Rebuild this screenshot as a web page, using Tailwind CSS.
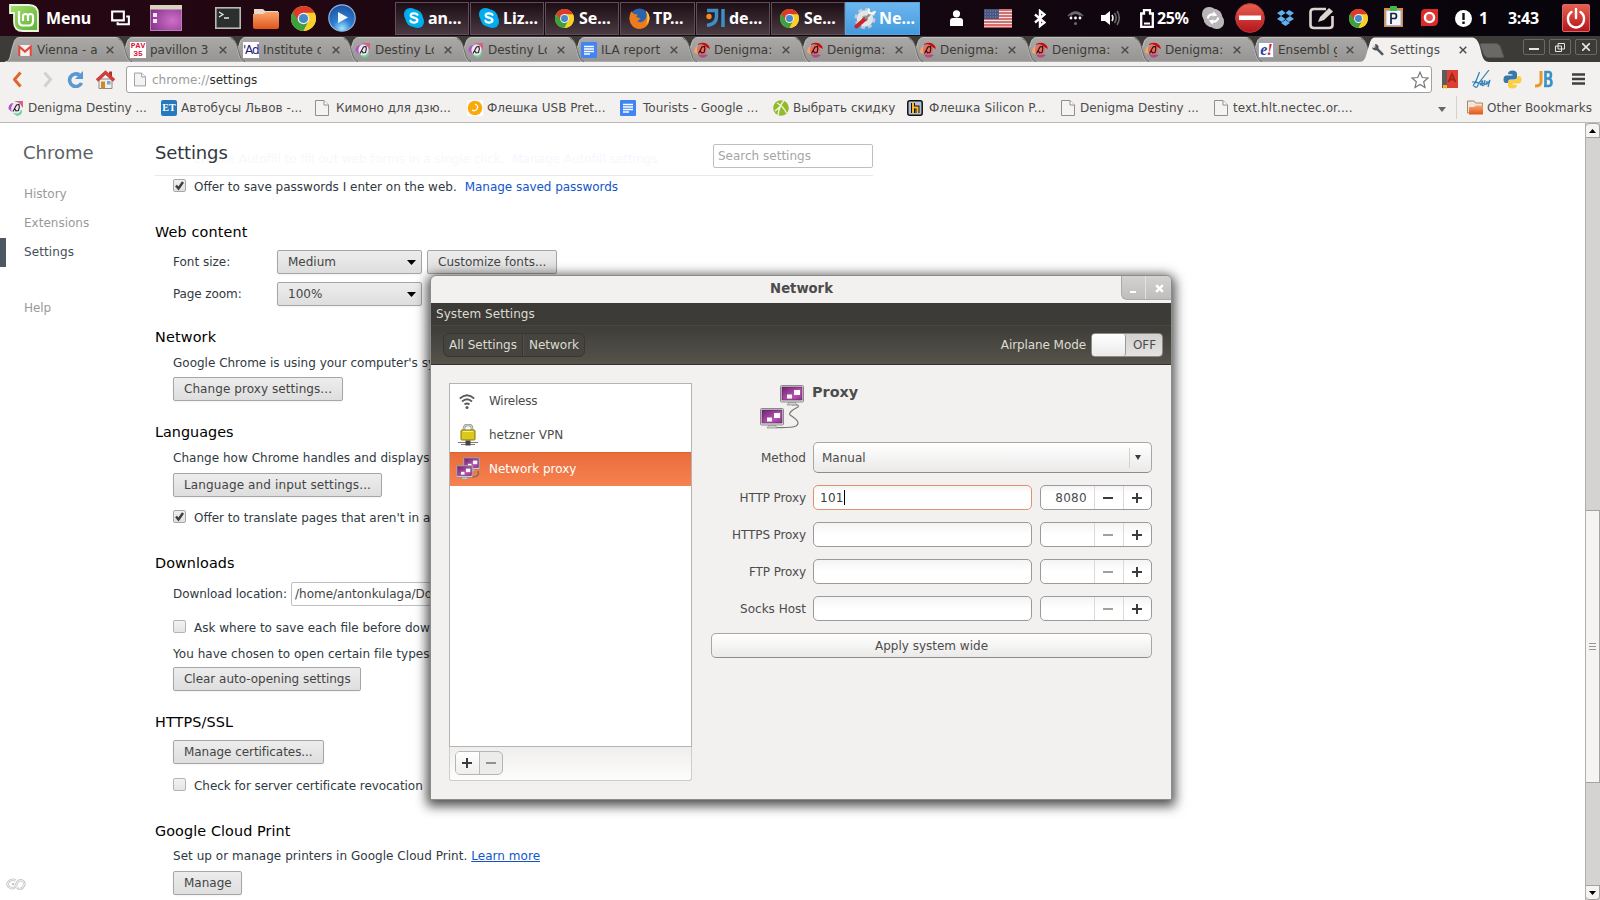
<!DOCTYPE html>
<html lang="en">
<head>
<meta charset="utf-8">
<title>Settings</title>
<script src="https://cdn.jsdelivr.net/npm/@tailwindcss/browser@4"></script>
</head>
<body class="w-[1600px] h-[900px] overflow-hidden relative bg-white font-['DejaVu_Sans',sans-serif] text-xs text-[#303942] whitespace-nowrap">

<!-- shared symbols -->
<svg width="0" height="0" class="absolute">
  <defs>
    <linearGradient id="tabg" x1="0" y1="0" x2="0" y2="1"><stop offset="0" stop-color="#aaa9a7"/><stop offset="1" stop-color="#959492"/></linearGradient>
    <linearGradient id="purp" x1="0" y1="0" x2="1" y2="1"><stop offset="0" stop-color="#6d2270"/><stop offset=".65" stop-color="#b954b2"/><stop offset="1" stop-color="#8a3288"/></linearGradient>
    <radialGradient id="desk" cx=".7" cy=".6" r=".8"><stop offset="0" stop-color="#cf6fc6"/><stop offset="1" stop-color="#83308a"/></radialGradient>
    <linearGradient id="org" x1="0" y1="0" x2="0" y2="1"><stop offset="0" stop-color="#f9a56d"/><stop offset="1" stop-color="#e0561c"/></linearGradient>
    <linearGradient id="redg" x1="0" y1="0" x2="0" y2="1"><stop offset="0" stop-color="#e8604f"/><stop offset="1" stop-color="#b3141b"/></linearGradient>
    <radialGradient id="blu" cx=".5" cy=".9" r=".9"><stop offset="0" stop-color="#9ee8ff"/><stop offset=".4" stop-color="#2f7fd0"/><stop offset="1" stop-color="#1c4fa0"/></radialGradient>
    <linearGradient id="mint" x1="0" y1="0" x2="1" y2="1"><stop offset="0" stop-color="#a6e06c"/><stop offset="1" stop-color="#5fb038"/></linearGradient>
  </defs>
  <symbol id="tab" viewBox="0 0 129 25"><path d="M0 25C6 25 5 17 8.500 7C10 2 11 .5 15 .5H110C114 .5 116 2 118 7C121 16 121 25 127 25Z" fill="url(#tabg)" stroke="#c3c2c0" stroke-width="1"/><path d="M113 1.500Q116.500 2 118.500 7C121.500 16 122 24 127 24.500" fill="none" stroke="#6b6a66" stroke-width="1"/></symbol>
  <symbol id="x" viewBox="0 0 8 8"><path d="M.7.7L7.300 7.300M7.300.7L.7 7.300" stroke="#4a4a48" stroke-width="1.400"/></symbol>
  <symbol id="chrome" viewBox="0 0 24 24"><circle cx="12" cy="12" r="12" fill="#f7cf25"/><path d="M12 12L1.600 6A12 12 0 0 0 12 24L17 14.500Z" fill="#3fa13e"/><path d="M12 6.500H22.600A12 12 0 0 1 12 24L16.800 14.700Z" fill="#f9d02b"/><path d="M1.600 6A12 12 0 0 1 22.600 6.500H12L7 14Z" fill="#dc3b2b"/><circle cx="12" cy="12" r="5.600" fill="#f3f3ee"/><circle cx="12" cy="12" r="4.400" fill="#4787cc"/></symbol>
  <symbol id="skype" viewBox="0 0 20 20"><rect x="0" y="0" width="13" height="13" rx="6" fill="#00a9ee"/><rect x="7" y="7" width="13" height="13" rx="6" fill="#00a9ee"/><circle cx="10" cy="10" r="8.700" fill="#00aff0"/><path d="M13.500 6.800C12.500 4.800 6.800 4.600 6.700 7.400C6.700 10.300 13.400 9 13.400 12.300C13.400 15.200 7.500 15.400 6.400 12.700" fill="none" stroke="#fff" stroke-width="2.200" stroke-linecap="round"/></symbol>
  <symbol id="doc" viewBox="0 0 16 16"><rect width="16" height="16" rx="1" fill="#4184f3"/><path d="M3 4.500H13M3 7H13M3 9.500H13M3 12H9" stroke="#fff" stroke-width="1.300"/></symbol>
  <symbol id="page" viewBox="0 0 14 16"><path d="M.5.5H9L13.500 5V15.500H.5Z" fill="#f3f3f3" stroke="#8f8f8f"/><path d="M9 .5V5H13.500" fill="#fff" stroke="#8f8f8f"/></symbol>
  <symbol id="dest" viewBox="0 0 16 16"><path d="M6 1L15 1V8L11 3Z" fill="#d8618c"/><path d="M4 3Q0 5 .5 9L4 12Q2 7 6 4Z" fill="#b552d0"/><path d="M5 13L14 10Q15 15 9 16Z" fill="#6fcf9a"/><ellipse cx="8.500" cy="8" rx="5" ry="5.500" fill="#eee6ee"/><path d="M5 11.500L8.500 5L11 4.500Q12 7 10.500 10.500L8 11L7 9" fill="none" stroke="#222" stroke-width="1.100"/></symbol>
  <symbol id="den" viewBox="0 0 16 16"><path d="M4 2Q11-1.500 15 4L16 7L12 5Q9 1 4 3Z" fill="#cc0b0b"/><path d="M3 4Q-1 7 .5 11L4 12Z" fill="#f0a868"/><path d="M4 12.500Q10 12 14 13Q10 17 6 15Z" fill="#b04a88"/><circle cx="8" cy="8" r="5" fill="#e86b64"/><path d="M4.500 11.500L8 5L10.500 4.500Q11.500 7 10 10.500L7.500 11L6.500 9" fill="none" stroke="#1b1010" stroke-width="1.100"/></symbol>
  <symbol id="mon" viewBox="0 0 24 21"><path d="M9 17H15L17 20H7Z" fill="#d0d0cc" stroke="#888" stroke-width=".7"/><rect x=".5" y=".5" width="23" height="16.500" rx="1" fill="#e4e4e1" stroke="#8a8a86"/><rect x="2" y="2" width="20" height="13" fill="url(#purp)" stroke="#5d1a62" stroke-width=".6"/><rect x="14" y="5" width="6" height="5" fill="#fff"/><rect x="7" y="9.500" width="5" height="4" fill="#fff"/></symbol>
  <symbol id="plus" viewBox="0 0 12 12"><path d="M1 6H11M6 1V11" stroke="#3c3c3c" stroke-width="2"/></symbol>
  <symbol id="minus" viewBox="0 0 12 12"><path d="M1 6H11" stroke="currentColor" stroke-width="2"/></symbol>
</svg>

<!-- desktop panel -->
<header class="h-9 w-full flex items-center bg-linear-to-r from-[#260713] via-[#170711] via-50% to-[#07040b] text-white font-['Noto_Sans','Open_Sans',sans-serif] font-bold text-base">
    <svg class="ml-[9px] w-[30px] h-7" viewBox="0 0 30 28"><path d="M1 1H20Q29 1 29 10V27H14Q5 27 5 18V9H1Z" fill="url(#mint)" stroke="#e9f5df" stroke-width="1.800"/><path d="M10 7V17Q10 21.500 14 21.500H20Q24 21.500 24 17V12.500Q24 10 21.500 10T19 12.500V17M19 12.500Q19 10 16.500 10T14 12.500V17" fill="none" stroke="#fff" stroke-width="2.200"/></svg>
    <span class="ml-[7px] w-[44px] tracking-[-0.1px]">Menu</span>
    <svg class="ml-[21px] w-[19px] h-4" viewBox="0 0 20 16"><path d="M1.200 1.200H13.500V10.500H1.200ZM16 6.500H18.800V14.500H7V12.500" fill="none" stroke="#fff" stroke-width="2.200"/></svg>
    <svg class="ml-5 w-8 h-[26px]" viewBox="0 0 32 26"><rect x=".5" y=".5" width="31" height="25" fill="url(#desk)" stroke="#b77fbd"/><rect width="32" height="4.500" fill="#d8d3bd"/><rect x="3" y="8" width="4" height="4" fill="#f3e8f3"/><rect x="3" y="14" width="4" height="4" fill="#f3e8f3"/></svg>
    <svg class="ml-[33px] w-[26px] h-[22px]" viewBox="0 0 26 22"><rect x=".8" y=".8" width="24.400" height="20.400" fill="#2b302e" stroke="#b9b9b4" stroke-width="1.600"/><path d="M4 5L8 7.500L4 10M9 11H14" fill="none" stroke="#e8e8e8" stroke-width="1.300"/></svg>
    <svg class="ml-3 w-[26px] h-[22px]" viewBox="0 0 26 22"><path d="M1 2H10L12 4H25V10H1Z" fill="#e8d9cc"/><path d="M0 7H10L13 5H26V20Q26 22 24 22H2Q0 22 0 20Z" fill="url(#org)"/></svg>
    <svg class="ml-3 size-[25px]"><use href="#chrome"/></svg>
    <svg class="ml-3 size-7" viewBox="0 0 28 28"><circle cx="14" cy="14" r="13.200" fill="url(#blu)" stroke="#8fb4dd" stroke-width="1.200"/><path d="M10 8L20 13.500L10 19Z" fill="#f3f7fb"/></svg>
    <!-- window list -->
    <div class="ml-[39px] flex h-[33px] gap-px">
      <div class="w-[74px] flex items-center pl-2 border border-[#5d4f57] bg-linear-to-b from-[#1d0e16] to-[#4a3b43]"><svg class="size-5 mr-1"><use href="#skype"/></svg>an...</div>
      <div class="w-[74px] flex items-center pl-2 border border-[#5d4f57] bg-linear-to-b from-[#1d0e16] to-[#4a3b43]"><svg class="size-5 mr-1"><use href="#skype"/></svg>Liz...</div>
      <div class="w-[74px] flex items-center pl-[9px] border border-[#5d4f57] bg-linear-to-b from-[#1d0e16] to-[#4a3b43]"><svg class="size-[19px] mr-[5px]"><use href="#chrome"/></svg>Se...</div>
      <div class="w-[75px] flex items-center pl-[8px] border border-[#5d4f57] bg-linear-to-b from-[#1d0e16] to-[#4a3b43]"><svg class="size-[21px] mr-[3px]" viewBox="0 0 20 20"><circle cx="10" cy="10" r="9.500" fill="#2b63ad"/><path d="M2 3Q0 8 .5 11A9.500 9.500 0 0 0 19.500 10Q19.500 5 16 2.500Q18 7 15.500 11Q12 15 8 12.500L11 10L7 8.500L8 6L5 6Z" fill="#f07b1c"/><path d="M16 2.500Q19.500 5 19.500 10Q19 14 16 16.500Q19 10 16 2.500Z" fill="#f8c840"/></svg>TP...</div>
      <div class="w-[74px] flex items-center pl-2 border border-[#5d4f57] bg-linear-to-b from-[#1d0e16] to-[#4a3b43]"><svg class="size-5 mr-1" viewBox="0 0 20 20"><path d="M2 2.500H11.500V9Q11.500 16 2 17.500" fill="none" stroke="#3b8fc9" stroke-width="3.500"/><path d="M18 1V19" stroke="#3b8fc9" stroke-width="3.500"/><circle cx="4" cy="8.500" r="2.700" fill="#f48b1b"/></svg>de...</div>
      <div class="w-[74px] flex items-center pl-2 border border-[#5d4f57] bg-linear-to-b from-[#1d0e16] to-[#4a3b43]"><svg class="size-[19px] mr-[5px]"><use href="#chrome"/></svg>Se...</div>
      <div class="w-[75px] -ml-px flex items-center pl-2 border border-[#5aa5dd] bg-linear-to-b from-[#6cb6ef] to-[#429bdd]"><svg class="size-[22px] mr-[3px]" viewBox="0 0 22 22"><circle cx="11" cy="11.500" r="9.300" fill="none" stroke="#c9ccce" stroke-width="2.400" stroke-dasharray="4 3.300"/><circle cx="11" cy="11.500" r="8.300" fill="#e4e5e6"/><circle cx="11" cy="11.500" r="3" fill="#9ca3a8"/><path d="M2.500 19.500L11 12" stroke="#d11f26" stroke-width="4" stroke-linecap="round"/><path d="M11 12L17 6" stroke="#8b9095" stroke-width="2.400"/><path d="M15 1.500Q14 6 17 6.500T21 4" fill="none" stroke="#fafafa" stroke-width="2.200"/></svg>Ne...</div>
    </div>
    <!-- tray -->
    <svg class="ml-[30px] w-[13px] h-4" viewBox="0 0 13 16"><circle cx="6.500" cy="3.800" r="3.600" fill="#fff"/><path d="M0 16V11Q0 8 3 8H10Q13 8 13 11V16Z" fill="#fff"/></svg>
    <svg class="ml-[21px] w-7 h-[19px]" viewBox="0 0 28 19"><rect width="28" height="19" fill="#f0e6e6"/><path d="M0 1H28M0 4H28M0 7H28M0 10H28M0 13H28M0 16H28M0 18.500H28" stroke="#c9494c" stroke-width="1.500"/><rect width="15" height="10" fill="#45557f"/><path d="M1 2H15M1 5H15M1 8H15" stroke="#8e9ab8" stroke-dasharray="1 1.500"/></svg>
    <svg class="ml-[22px] w-3 h-[19px]" viewBox="0 0 12 18"><path d="M1 5L10.500 13L6 16.500V1.500L10.500 5L1 13" fill="none" stroke="#fff" stroke-width="2.400"/></svg>
    <svg class="ml-[21px] w-[17px] h-4" viewBox="0 0 17 16"><path d="M1 6Q8.500-2 16 6M3.500 5.500Q8.500 1 13.500 5.500" fill="none" stroke="#6d6a6d" stroke-width="1.500"/><circle cx="4" cy="8" r="1.400" fill="#fff"/><circle cx="8.500" cy="8" r="1.400" fill="#fff"/><circle cx="13" cy="8" r="1.400" fill="#fff"/><circle cx="8.500" cy="13.500" r="1.500" fill="#6d6a6d"/></svg>
    <svg class="ml-[17px] w-[19px] h-4" viewBox="0 0 19 16"><path d="M0 5H4L9 1V15L4 11H0Z" fill="#fff"/><path d="M11 5Q13 8 11 11" fill="none" stroke="#eee" stroke-width="1.600"/><path d="M13.500 3Q17 8 13.500 13M16 1Q20.500 8 16 15" fill="none" stroke="#6d6a6d" stroke-width="1.500"/></svg>
    <svg class="ml-5 w-[14px] h-[19px]" viewBox="0 0 14 19"><path d="M1.200 4.500H4V1.200H10V4.500H12.800V17.800H1.200Z" fill="none" stroke="#fff" stroke-width="2.300"/><path d="M4 14.500H10" stroke="#fff" stroke-width="2"/></svg>
    <span class="ml-[3px] w-[33px] text-base tracking-[-0.4px]">25%</span>
    <svg class="ml-[12px] size-[22px]" viewBox="0 0 23 23"><rect width="15" height="15" rx="7" fill="#b8b6b8"/><rect x="8" y="8" width="15" height="15" rx="7" fill="#b8b6b8"/><circle cx="11.500" cy="11.500" r="10" fill="#b8b6b8"/><path d="M6 12Q7 6.500 13 8M17 11Q16 16.500 10 15" fill="none" stroke="#fff" stroke-width="2.400"/><path d="M12 4.500L16 9L11 10ZM11 18.500L7 14L12 13Z" fill="#fff"/></svg>
    <svg class="ml-[11px] size-[30px]" viewBox="0 0 30 30"><circle cx="15" cy="15" r="14.400" fill="url(#redg)" stroke="#b6383a"/><rect x="4" y="12.500" width="22" height="4.500" fill="#fff"/></svg>
    <svg class="ml-3 w-[17px] h-4" viewBox="0 0 17 16"><path d="M5 0L8.500 3L4 6L0 3ZM12 0L17 3L13 6L8.500 3ZM0 9L4 6L8.500 9L5 12ZM17 9L13 6L8.500 9L12 12ZM4 13L8.500 10L13 13L8.500 16Z" fill="#5fb0ee"/></svg>
    <svg class="ml-[15px] w-[26px] h-[23px]" viewBox="0 0 26 23"><path d="M17 2H5Q1.500 2 1.500 5V18Q1.500 21 5 21H20Q23.500 21 23.500 18V9" fill="none" stroke="#dcd6d0" stroke-width="2.600"/><path d="M9 15L11 10L20 1L24 4.500L15 13Z" fill="#dcd6d0"/></svg>
    <svg class="ml-[14px] size-[19px]"><use href="#chrome"/></svg>
    <svg class="ml-4 w-[19px] h-[21px] -mt-1" viewBox="0 0 19 21"><rect y="2" width="19" height="19" fill="#d98a45"/><rect x="2" y="4.500" width="15" height="15" fill="#f4f6fb" stroke="#9fb6d8"/><rect x="6" width="7" height="5" rx="1" fill="#3fb949"/><path d="M7 18V7.500H10.500Q12.500 7.500 12.500 10T10.500 12.500H7" fill="none" stroke="#14213d" stroke-width="1.700"/></svg>
    <svg class="ml-[18px] size-[17px] -mt-[2px]" viewBox="0 0 17 17"><path d="M4 0H17V12Q17 17 12 17H0V5Q0 0 4 0Z" fill="#dd2a2b"/><circle cx="8.500" cy="8.500" r="4.600" fill="#e2514f" stroke="#fff" stroke-width="2.400"/></svg>
    <svg class="ml-[17px] size-[17px]" viewBox="0 0 17 17"><circle cx="8.500" cy="8.500" r="8.500" fill="#fff"/><path d="M8.500 3V10M8.500 11.500V14" stroke="#111" stroke-width="2.400"/></svg>
    <span class="ml-[7px] w-[10px]">1</span>
    <span class="ml-[19px] w-[34px] tracking-[-0.3px]">3:43</span>
    <svg class="ml-[20px] size-7" viewBox="0 0 28 28"><rect x=".5" y=".5" width="27" height="27" rx="1.500" fill="url(#redg)" stroke="#d4696a"/><path d="M9.500 8Q5.500 11 6 15.500A8 8 0 0 0 22 15.500Q22.500 11 18.500 8M14 5V14" fill="none" stroke="#fff" stroke-width="2.400" stroke-linecap="round"/></svg>
</header>

<!-- tab strip -->
<nav class="h-[26px] bg-[#3c3b37] flex items-end pl-[5px] text-[#3c3b37] overflow-hidden">
  <div class="relative z-20 w-[129px] -mr-4 h-[25px] shrink-0"><svg class="absolute inset-0 w-[129px] h-[25px]"><use href="#tab"/></svg><div class="relative flex items-center h-[25px] pt-px pl-[13px]"><svg class="w-[14px] h-[11px]" viewBox="0 0 14 11"><rect width="14" height="11" fill="#f3f0ef"/><path d="M1.200 11V1.500L7 6.500L12.800 1.500V11" fill="none" stroke="#dc4b3e" stroke-width="2.200"/></svg><span class="ml-[5px] w-[60px]">Vienna - a</span><svg class="ml-[9px] size-2"><use href="#x"/></svg></div></div>
  <div class="relative z-19 w-[129px] -mr-4 h-[25px] shrink-0"><svg class="absolute inset-0 w-[129px] h-[25px]"><use href="#tab"/></svg><div class="relative flex items-center h-[25px] pt-px pl-3"><div class="size-4 bg-white text-[#e0103a] text-[8px] leading-[8px] font-['Liberation_Mono',monospace] font-bold text-center">PAV<br>35</div><span class="ml-[4px] w-[60px]">pavillon 3</span><svg class="ml-[9px] size-2"><use href="#x"/></svg></div></div>
  <div class="relative z-18 w-[129px] -mr-4 h-[25px] shrink-0"><svg class="absolute inset-0 w-[129px] h-[25px]"><use href="#tab"/></svg><div class="relative flex items-center h-[25px] pt-px pl-3"><div class="size-4 bg-white text-[#1a237e] text-[12px] leading-4 tracking-[-1.200px]">'Ad</div><span class="ml-[4px] w-[58px] overflow-hidden">Institute of</span><svg class="ml-[11px] size-2"><use href="#x"/></svg></div></div>
  <div class="relative z-17 w-[129px] -mr-4 h-[25px] shrink-0"><svg class="absolute inset-0 w-[129px] h-[25px]"><use href="#tab"/></svg><div class="relative flex items-center h-[25px] pt-px pl-[11px]"><svg class="size-4"><use href="#dest"/></svg><span class="ml-[4px] w-[59px] overflow-hidden">Destiny Lo</span><svg class="ml-[10px] size-2"><use href="#x"/></svg></div></div>
  <div class="relative z-16 w-[129px] -mr-4 h-[25px] shrink-0"><svg class="absolute inset-0 w-[129px] h-[25px]"><use href="#tab"/></svg><div class="relative flex items-center h-[25px] pt-px pl-[11px]"><svg class="size-4"><use href="#dest"/></svg><span class="ml-[4px] w-[59px] overflow-hidden">Destiny Lo</span><svg class="ml-[10px] size-2"><use href="#x"/></svg></div></div>
  <div class="relative z-15 w-[129px] -mr-4 h-[25px] shrink-0"><svg class="absolute inset-0 w-[129px] h-[25px]"><use href="#tab"/></svg><div class="relative flex items-center h-[25px] pt-px pl-[11px]"><svg class="size-4"><use href="#doc"/></svg><span class="ml-[4px] w-[59px]">ILA report</span><svg class="ml-[10px] size-2"><use href="#x"/></svg></div></div>
  <div class="relative z-14 w-[129px] -mr-4 h-[25px] shrink-0"><svg class="absolute inset-0 w-[129px] h-[25px]"><use href="#tab"/></svg><div class="relative flex items-center h-[25px] pt-px pl-[11px]"><svg class="size-4"><use href="#den"/></svg><span class="ml-[4px] w-[59px]">Denigma:</span><svg class="ml-[9px] size-2"><use href="#x"/></svg></div></div>
  <div class="relative z-13 w-[129px] -mr-4 h-[25px] shrink-0"><svg class="absolute inset-0 w-[129px] h-[25px]"><use href="#tab"/></svg><div class="relative flex items-center h-[25px] pt-px pl-[11px]"><svg class="size-4"><use href="#den"/></svg><span class="ml-[4px] w-[59px]">Denigma:</span><svg class="ml-[9px] size-2"><use href="#x"/></svg></div></div>
  <div class="relative z-12 w-[129px] -mr-4 h-[25px] shrink-0"><svg class="absolute inset-0 w-[129px] h-[25px]"><use href="#tab"/></svg><div class="relative flex items-center h-[25px] pt-px pl-[11px]"><svg class="size-4"><use href="#den"/></svg><span class="ml-[4px] w-[59px]">Denigma:</span><svg class="ml-[9px] size-2"><use href="#x"/></svg></div></div>
  <div class="relative z-11 w-[129px] -mr-4 h-[25px] shrink-0"><svg class="absolute inset-0 w-[129px] h-[25px]"><use href="#tab"/></svg><div class="relative flex items-center h-[25px] pt-px pl-[10px]"><svg class="size-4"><use href="#den"/></svg><span class="ml-[4px] w-[59px]">Denigma:</span><svg class="ml-[10px] size-2"><use href="#x"/></svg></div></div>
  <div class="relative z-10 w-[129px] -mr-4 h-[25px] shrink-0"><svg class="absolute inset-0 w-[129px] h-[25px]"><use href="#tab"/></svg><div class="relative flex items-center h-[25px] pt-px pl-[10px]"><svg class="size-4"><use href="#den"/></svg><span class="ml-[4px] w-[59px]">Denigma:</span><svg class="ml-[9px] size-2"><use href="#x"/></svg></div></div>
  <div class="relative z-9 w-[129px] -mr-4 h-[25px] shrink-0"><svg class="absolute inset-0 w-[129px] h-[25px]"><use href="#tab"/></svg><div class="relative flex items-center h-[25px] pt-px pl-[10px]"><div class="size-4 bg-white border border-[#98a3c8] text-[#2a3f9d] text-[16px] leading-[13px] font-bold italic text-center tracking-[-1px] font-['Liberation_Serif',serif]">e<span class="text-[#d21f2b]">!</span></div><span class="ml-[4px] w-[59px] overflow-hidden">Ensembl ge</span><svg class="ml-[9px] size-2"><use href="#x"/></svg></div></div>
  <div class="relative z-30 w-[129px] h-[25px] shrink-0"><svg class="absolute inset-0 w-[129px] h-[25px]" viewBox="0 0 129 25"><path d="M-1 25C5 25 5 17 8.500 7C10 2 11 .5 15 .5H110C114 .5 116 2 118 7C121 16 121 25 128 25Z" fill="#f2f1f0"/></svg><div class="relative flex items-center h-[25px] pt-px pl-[11px]"><svg class="size-3" viewBox="0 0 12 12"><path d="M1 1L3.500 3.500L3 0Q6 0 6.500 2.500L6.500 4.500L11.500 9.500Q12 11.500 10 11.500L5 6.500Q1 7 0 3.500L3 4Z" fill="#555"/></svg><span class="ml-[6px] w-[60px] tracking-[0.1px] text-[#4c4c4c]">Settings</span><svg class="ml-[9px] size-2"><use href="#x"/></svg></div></div>
  <svg class="-ml-[11px] mb-[4px] w-[26px] h-[15px] shrink-0" viewBox="0 0 26 15"><path d="M2 .5H17Q20 .5 21.500 4L25 14.500H9Q6 14.500 4.500 11L1 2Z" fill="#6b6965" stroke="#555450"/></svg>
  <div class="ml-auto mr-[3px] mb-[7px] flex gap-1 h-4">
    <div class="w-[22px] h-4 border border-[#6b6963] rounded-xs flex items-center justify-center"><svg class="w-[10px] h-2" viewBox="0 0 10 8"><path d="M0 6H10" stroke="#e8e6e3" stroke-width="2"/></svg></div>
    <div class="w-[22px] h-4 border border-[#6b6963] rounded-xs flex items-center justify-center"><svg class="w-[10px] h-[9px]" viewBox="0 0 10 9"><path d="M3 .5H9.500V6H3ZM.5 3H6.500V8.500H.5Z" fill="none" stroke="#e8e6e3"/></svg></div>
    <div class="w-[22px] h-4 border border-[#6b6963] rounded-xs flex items-center justify-center"><svg class="size-2" viewBox="0 0 8 8"><path d="M0 0L8 8M8 0L0 8" stroke="#e8e6e3" stroke-width="1.600"/></svg></div>
  </div>
</nav>

<!-- toolbar -->
<div class="h-[34px] bg-[#f2f1f0] flex items-center text-[#333]">
  <svg class="ml-3 w-[10px] h-[17px]" viewBox="0 0 10 17"><path d="M8.500 1.500L2.500 8.500L8.500 15.500" fill="none" stroke="#e2662a" stroke-width="3" stroke-linejoin="round"/></svg>
  <svg class="ml-[21px] w-[10px] h-[17px]" viewBox="0 0 10 17"><path d="M1.500 1.500L7.500 8.500L1.500 15.500" fill="none" stroke="#d3d1ce" stroke-width="3"/></svg>
  <svg class="ml-[14px] w-[17px] h-[17px]" viewBox="0 0 17 17"><path d="M14.500 12A6.300 6.300 0 1 1 12.500 4" fill="none" stroke="#5b97d3" stroke-width="3.600"/><path d="M16 0V8H8Z" fill="#5b97d3"/></svg>
  <svg class="ml-[12px] w-[19px] h-[19px]" viewBox="0 0 19 19"><path d="M3 9H16V18.500H3Z" fill="#f0efea" stroke="#8d8a84"/><rect x="13" y="1.500" width="3" height="5" fill="#b0302c"/><path d="M1 10.500L9.500 2.500L18 10.500" fill="none" stroke="#cc3f3c" stroke-width="3.400"/><rect x="5" y="11.500" width="4" height="7" fill="#c98b2c"/><rect x="11" y="11" width="3.500" height="3.500" fill="#7ba5cc"/></svg>
  <div class="ml-[11px] w-[1306px] h-[27px] mt-px border border-[#a3a09c] rounded-[3px] bg-white flex items-center pl-[7px] pr-[2px]">
    <svg class="w-3 h-[15px]"><use href="#page"/></svg>
    <span class="ml-[6px] text-[#9a9a9a]">chrome://<span class="text-[#2c2c2c]">settings</span></span>
    <svg class="ml-auto w-[18px] h-[18px]" viewBox="0 0 18 18"><path d="M9 1.200L11.300 6.500L17 7L12.700 10.800L14 16.500L9 13.500L4 16.500L5.300 10.800L1 7L6.700 6.500Z" fill="#fff" stroke="#777" stroke-width="1.200"/></svg>
  </div>
  <svg class="ml-[10px] w-4 h-[19px]" viewBox="0 0 16 19"><rect width="16" height="18" fill="#dc4034"/><rect width="5" height="18" fill="#5c5c5c"/><path d="M6.500 12L10 4L13.500 12M8 9.500H12" fill="none" stroke="#a32119" stroke-width="1.800"/><path d="M1 15H5V19L3 17.500L1 19Z" fill="#f3b623"/></svg>
  <svg class="ml-[14px] w-[19px] h-[18px]" viewBox="0 0 19 18"><path d="M0 12H5M1 16Q5 10 7.500 2M3 13Q7 11 6 15T2 16M6 14L17 0M9 12Q12 9 10 13T8 13L11 16M10 14Q13 13 13 11T12 15L15 13M15 11V14L18 10L16 17" fill="none" stroke="#2f80b5" stroke-width="1.200"/></svg>
  <svg class="ml-3 size-[19px]" viewBox="0 0 19 19"><path d="M5 4Q5 .5 9.500 .5T14 4V7Q14 9.500 11 9.500H7.500Q5 9.500 5 13H3Q.5 13 .5 9.500T3 5.500H9.500V4.500Z" fill="#3b78a9"/><path d="M14 15Q14 18.500 9.500 18.500T5 15V12Q5 10 8 10H11.500Q14.500 9.500 14.500 6H16Q18.500 6 18.500 9.500T16 13.500H9.500V14.500Z" fill="#fbd040"/></svg>
  <svg class="ml-3 w-[19px] h-[18px]" viewBox="0 0 19 18"><path d="M7 1V12Q7 16 1 16" fill="none" stroke="#e79a2c" stroke-width="3"/><path d="M11.500 16V2H14.500Q17 2 17 5T14.500 8.500H11.500M14.500 8.500Q17.500 9 17.500 12.500T14.500 16H10" fill="none" stroke="#3a92c4" stroke-width="2.600"/></svg>
  <svg class="ml-[19px] w-[13px] h-3" viewBox="0 0 13 12"><path d="M0 1.500H13M0 6H13M0 10.500H13" stroke="#3f3f3f" stroke-width="2.600"/></svg>
</div>

<!-- bookmarks bar -->
<div class="h-[27px] bg-[#f2f1f0] border-b border-[#bdbbb8] flex items-center pl-2 pb-[4px] pt-[1px] text-[#4c4c4c]">
  <div class="w-[153px] flex items-center gap-1"><svg class="size-4"><use href="#dest"/></svg>Denigma Destiny ...</div>
  <div class="w-[153px] flex items-center gap-1"><div class="size-4 rounded-xs bg-[#2779bf] text-white text-[10px] leading-4 font-bold font-['Liberation_Serif',serif] text-center">ET</div>Автобусы Львов -...</div>
  <div class="w-[153px] flex items-center gap-[7px] pl-px"><svg class="w-[14px] h-4"><use href="#page"/></svg>Кимоно для дзю...</div>
  <div class="w-[153px] flex items-center gap-1"><svg class="size-4" viewBox="0 0 16 16"><rect width="16" height="16" fill="#fff"/><circle cx="8" cy="8" r="7.300" fill="#fba90a"/><path d="M8 4Q12 6 10 9T5 10" fill="none" stroke="#fff" stroke-width="1.300"/></svg>Флешка USB Pret...</div>
  <div class="w-[153px] flex items-center gap-[7px]"><svg class="size-4"><use href="#doc"/></svg>Tourists - Google ...</div>
  <div class="w-[134px] flex items-center gap-1"><svg class="size-4" viewBox="0 0 16 16"><circle cx="8" cy="8" r="7.800" fill="#93b92c"/><path d="M5 15.500Q6 6 11 .5M4 3Q10 6 13.500 13M2 11Q6 8 7.500 6" fill="none" stroke="#f3f7e6" stroke-width="1.300"/></svg>Выбрать скидку</div>
  <div class="w-[154px] flex items-center gap-[6px] tracking-[0.1px]"><svg class="size-4" viewBox="0 0 16 16"><rect x=".8" y=".8" width="14.400" height="14.400" rx="2" fill="#b4bfd2" stroke="#111" stroke-width="1.500"/><path d="M6 3V13M6 7.500H10.500V13" fill="none" stroke="#111" stroke-width="4"/><path d="M6 3V13M6 7.500H10.500V13" fill="none" stroke="#fbb829" stroke-width="2"/></svg>Флешка Silicon P...</div>
  <div class="w-[153px] flex items-center gap-[5px]"><svg class="w-[14px] h-4"><use href="#page"/></svg>Denigma Destiny ...</div>
  <div class="w-[224px] flex items-center gap-[5px] tracking-[0.1px]"><svg class="w-[14px] h-4"><use href="#page"/></svg>text.hlt.nectec.or....</div>
  <svg class="w-2 h-[5px] mt-1" viewBox="0 0 8 5"><path d="M0 0H8L4 5Z" fill="#666"/></svg>
  <div class="ml-[10px] w-px h-[23px] bg-[#d4d2cf]"></div>
  <svg class="ml-[10px] w-4 h-[15px]" viewBox="0 0 16 15"><path d="M.5 1H7L8.500 3H15.500V13H.5Z" fill="#f1e5dc" stroke="#a3866f"/><path d="M2 14.500V7L7 7L9 5.500H16V14.500Z" fill="url(#org)"/></svg>
  <span class="ml-1">Other Bookmarks</span>
</div>

<!-- settings page -->
<main class="flex h-[777px] bg-white">
  <aside class="w-[155px] flex flex-col text-[#999]">
    <h1 class="mt-[16px] ml-[23px] h-7 leading-7 text-lg text-[#5c6166]">Chrome</h1>
    <div class="mt-[13px] h-[29px] leading-[29px] pl-6">History</div>
    <div class="h-[29px] leading-[29px] pl-6">Extensions</div>
    <div class="h-[29px] leading-[29px] pl-[18px] border-l-6 border-[#4e5764] tracking-[0.1px] text-[#464e5a]">Settings</div>
    <div class="mt-[27px] h-[29px] leading-[29px] pl-6 tracking-[-0.1px]">Help</div>
    <svg class="mt-auto mb-[10px] ml-[6px] w-[20px] h-3" viewBox="0 0 20 12"><path d="M10 2.500Q5 .5 2.500 4T4 9.500T9.500 8L11.500 4Q14 1 17 3T17 9T11 9.500M7 5V7" fill="none" stroke="#c4c4c4" stroke-width="2.400"/><path d="M10 2.500Q5 .5 2.500 4T4 9.500T9.500 8L11.500 4Q14 1 17 3T17 9T11 9.500" fill="none" stroke="#f6f6f6" stroke-width="1"/></svg>
  </aside>
  <section class="w-[1430px] flex flex-col items-start">
    <div class="relative w-[718px] h-[53px] border-b border-[#eaeaea] flex">
      <div class="absolute left-[39px] top-[26px] leading-5 text-[#f8f8f9]">Enable Autofill to fill out web forms in a single click.&nbsp; <span class="text-[#f5f8fe]">Manage Autofill settings</span></div>
      <h2 class="relative mt-4 h-7 leading-7 text-lg tracking-[-0.15px]">Settings</h2>
      <div class="relative ml-auto mt-[21px] w-40 h-6 border border-[#bfbfbf] rounded-xs pl-1 leading-[22px] text-[#a5a5a5] bg-white">Search settings</div>
    </div>
    <div class="ml-[18px] h-[22px] flex items-center"><div class="size-[13px] -mt-[3px] mr-2 rounded-xs border border-[#a8a8a8] bg-linear-to-b from-[#f0f0f0] to-[#e0e0e0]"><svg class="size-[11px]" viewBox="0 0 11 11"><path d="M2 5.500L4.500 8.500L9 2" fill="none" stroke="#3f3f3f" stroke-width="2.400"/></svg></div>Offer to save passwords I enter on the web.<a class="ml-[8px] tracking-[-0.04px] text-[#15c]">Manage saved passwords</a></div>
    <h3 class="mt-6 h-5 leading-5 text-[14.400px] tracking-[0.13px] text-black">Web content</h3>
    <div class="ml-[18px] mt-2 h-6 flex items-center"><span class="w-[104px]">Font size:</span>
      <div class="w-[145px] h-6 rounded-xs border border-[#a6a6a6] bg-linear-to-b from-[#ededed] to-[#dedede] shadow-xs flex items-center pl-[10px] pr-[5px] text-[#444]">Medium<svg class="ml-auto w-[9px] h-[5px]" viewBox="0 0 9 5"><path d="M0 0H9L4.500 5Z" fill="#000"/></svg></div>
      <div class="ml-[5px] w-[130px] h-6 rounded-xs border border-[#a6a6a6] bg-linear-to-b from-[#ededed] to-[#dedede] shadow-xs leading-[22px] pl-[10px] text-[#444]">Customize fonts...</div></div>
    <div class="ml-[18px] mt-2 h-6 flex items-center"><span class="w-[104px] tracking-[-0.1px]">Page zoom:</span>
      <div class="w-[145px] h-6 rounded-xs border border-[#a6a6a6] bg-linear-to-b from-[#ededed] to-[#dedede] shadow-xs flex items-center pl-[10px] pr-[5px] text-[#444]">100%<svg class="ml-auto w-[9px] h-[5px]" viewBox="0 0 9 5"><path d="M0 0H9L4.500 5Z" fill="#000"/></svg></div></div>
    <h3 class="mt-[21px] h-5 leading-5 text-[14.400px] tracking-[0.15px] text-black">Network</h3>
    <p class="ml-[18px] mt-[6px] h-5 leading-5">Google Chrome is using your computer's system proxy settings</p>
    <div class="ml-[18px] mt-1 w-[170px] h-6 rounded-xs border border-[#a6a6a6] bg-linear-to-b from-[#ededed] to-[#dedede] shadow-xs leading-[22px] pl-[10px] tracking-[0.07px] text-[#444]">Change proxy settings...</div>
    <h3 class="mt-[21px] h-5 leading-5 text-[14.400px] text-black">Languages</h3>
    <p class="ml-[18px] mt-[6px] h-5 leading-5 tracking-[0.03px]">Change how Chrome handles and displays languages.</p>
    <div class="ml-[18px] mt-[5px] w-[209px] h-6 rounded-xs border border-[#a6a6a6] bg-linear-to-b from-[#ededed] to-[#dedede] shadow-xs leading-[22px] pl-[10px] tracking-[0.12px] text-[#444]">Language and input settings...</div>
    <div class="ml-[18px] mt-[11px] h-5 flex items-center"><div class="size-[13px] -mt-[3px] mr-2 rounded-xs border border-[#a8a8a8] bg-linear-to-b from-[#f0f0f0] to-[#e0e0e0]"><svg class="size-[11px]" viewBox="0 0 11 11"><path d="M2 5.500L4.500 8.500L9 2" fill="none" stroke="#3f3f3f" stroke-width="2.400"/></svg></div>Offer to translate pages that aren't in a language I read.</div>
    <h3 class="mt-[25px] h-5 leading-5 text-[14.400px] tracking-[0.05px] text-black">Downloads</h3>
    <div class="ml-[18px] mt-[9px] h-6 flex items-center"><span class="w-[118px] tracking-[-0.07px]">Download location:</span><div class="w-[300px] h-6 border border-[#bfbfbf] rounded-xs pl-[3px] leading-[22px] text-[#444]">/home/antonkulaga/Downloads</div></div>
    <div class="ml-[18px] mt-3 h-5 flex items-center"><div class="size-[13px] -mt-[3px] mr-2 rounded-xs border border-[#b4b4b4] bg-linear-to-b from-[#f3f3f3] to-[#e4e4e4]"></div>Ask where to save each file before downloading</div>
    <p class="ml-[18px] mt-[6px] h-5 leading-5 tracking-[0.04px]">You have chosen to open certain file types automatically</p>
    <div class="ml-[18px] mt-[3px] w-[188px] h-6 rounded-xs border border-[#a6a6a6] bg-linear-to-b from-[#ededed] to-[#dedede] shadow-xs leading-[22px] pl-[10px] tracking-[-0.02px] text-[#444]">Clear auto-opening settings</div>
    <h3 class="mt-[21px] h-5 leading-5 text-[14.400px] tracking-[0.12px] text-black">HTTPS/SSL</h3>
    <div class="ml-[18px] mt-2 w-[151px] h-6 rounded-xs border border-[#a6a6a6] bg-linear-to-b from-[#ededed] to-[#dedede] shadow-xs leading-[22px] pl-[10px] tracking-[-0.05px] text-[#444]">Manage certificates...</div>
    <div class="ml-[18px] mt-3 h-5 flex items-center tracking-[-0.05px]"><div class="size-[13px] -mt-[3px] mr-2 rounded-xs border border-[#b4b4b4] bg-linear-to-b from-[#f3f3f3] to-[#e4e4e4]"></div>Check for server certificate revocation</div>
    <h3 class="mt-[25px] h-5 leading-5 text-[14.400px] tracking-[0.08px] text-black">Google Cloud Print</h3>
    <p class="ml-[18px] mt-[5px] h-5 leading-5 tracking-[0.04px]">Set up or manage printers in Google Cloud Print. <a class="text-[#15c] underline">Learn more</a></p>
    <div class="ml-[18px] mt-[5px] w-[69px] h-6 rounded-xs border border-[#a6a6a6] bg-linear-to-b from-[#ededed] to-[#dedede] shadow-xs leading-[22px] pl-[10px] text-[#444]">Manage</div>
  </section>
  <!-- scrollbar -->
  <div class="w-[15px] h-full bg-[#d5d3d1] border-l border-[#b0aeab] flex flex-col">
    <div class="h-[15px] bg-[#f5f4f3] border border-l-0 border-[#a5a3a0] rounded-t-sm flex items-center justify-center"><svg class="w-[7px] h-1" viewBox="0 0 7 4"><path d="M0 4L3.500 0L7 4Z" fill="#000"/></svg></div>
    <div class="mt-[372px] h-[273px] bg-[#f5f4f3] border border-l-0 border-[#a5a3a0] flex items-center justify-center"><svg class="w-[7px] h-[7px]" viewBox="0 0 7 7"><path d="M0 .5H7M0 3.500H7M0 6.500H7" stroke="#9a9895"/></svg></div>
    <div class="mt-auto h-[15px] bg-[#f5f4f3] border border-l-0 border-[#a5a3a0] rounded-b-sm flex items-center justify-center"><svg class="w-[7px] h-1" viewBox="0 0 7 4"><path d="M0 0L3.500 4L7 0Z" fill="#000"/></svg></div>
  </div>
</main>

<!-- network window -->
<div class="absolute left-[430px] top-[275px] w-[742px] h-[525px] z-40 rounded-t-md border border-[#8d8c89] bg-[#f2f1f0] shadow-[0_3px_12px_3px_rgba(0,0,0,0.7)] text-[#4c4c4c] flex flex-col">
  <div class="h-[27px] flex items-center relative rounded-t-md shrink-0">
    <span class="w-full text-center font-bold text-[13.200px] pb-[2px] pl-[1px]">Network</span>
    <div class="absolute right-0 top-0 w-[50px] h-6 flex rounded-bl-md rounded-tr-[5px] border-l border-b border-[#aaa9a7] bg-linear-to-b from-[#d3d2d1] to-[#bfbebd]">
      <div class="w-6 flex justify-center items-end pb-[6px] border-r border-[#e3e2e1]"><div class="w-[6px] h-[2px] mr-px bg-white"></div></div>
      <div class="flex-1 flex items-center justify-center pt-px pl-px"><svg class="size-[9px]" viewBox="0 0 8 8"><path d="M1 1L7 7M7 1L1 7" stroke="#fff" stroke-width="2.200"/></svg></div>
    </div>
  </div>
  <div class="h-[62px] shrink-0 bg-[#3c3b37] border-b border-[#33322e] text-[#dfdbd2] flex flex-col">
    <div class="h-[22px] leading-[22px] pl-[5px] tracking-[0.07px]">System Settings</div>
    <div class="flex-1 border-t border-[#484741] bg-linear-to-b from-[#3e3d39] to-[#55534a] flex pt-[7px]">
      <div class="ml-[12px] h-6 w-[142px] rounded-md border border-[#37362f] bg-[#45443e] flex leading-[22px]"><span class="w-[79px] text-center border-r border-[#37362f]">All Settings</span><span class="flex-1 text-center border-l border-[#504f48]">Network</span></div>
      <span class="ml-auto leading-[24px] tracking-[-0.08px]">Airplane Mode</span>
      <div class="ml-[5px] mr-2 w-[72px] h-6 rounded-[4px] border border-[#8c8b87] bg-linear-to-b from-[#d2d1d0] to-[#e4e3e2] flex text-[#4c4c4c] leading-[22px]"><div class="w-[34px] rounded-[3px] border-r border-[#9a9895] bg-linear-to-b from-white to-[#ebeae9]"></div><span class="flex-1 text-center pl-px">OFF</span></div>
    </div>
  </div>
  <div class="flex flex-1 min-h-0">
    <div class="ml-[18px] mt-[18px] w-[243px] h-[398px] flex flex-col">
      <div class="h-[364px] bg-white border border-[#b6b4b2]">
        <div class="h-[34px] flex items-center pl-[9px]"><svg class="w-4 h-[15px]" viewBox="0 0 16 15"><path d="M.8 4.500Q8-2 15.200 4.500M3 7.500Q8 3 13 7.500M5.500 10.500Q8 8.500 10.500 10.500" fill="none" stroke="#5a5a5a" stroke-width="1.700"/><circle cx="8" cy="13.500" r="1.500" fill="#5a5a5a"/></svg><span class="ml-[14px] tracking-[-0.25px]">Wireless</span></div>
        <div class="h-[34px] flex items-center pl-2"><svg class="w-5 h-[22px]" viewBox="0 0 20 22"><path d="M6 8V4.500Q6 1 10 1T14 4.500V8" fill="none" stroke="#8d8d8a" stroke-width="2.600"/><path d="M6 8V4.500Q6 1 10 1T14 4.500V8" fill="none" stroke="#d8d8d4" stroke-width="1.200"/><rect x="3" y="6" width="14" height="10" rx="1" fill="#dcc81c" stroke="#857906"/><path d="M5 7.500H15" stroke="#f8f08a"/><path d="M0 18.500H20M3 20.500H17" stroke="#777"/><rect x="7.500" y="16.500" width="5" height="5" fill="#444"/></svg><span class="ml-[11px]">hetzner VPN</span></div>
        <div class="h-[34px] flex items-center pl-[6px] pb-px text-white bg-linear-to-b from-[#e96d3c] to-[#f6824f] border-t border-[#dc6031]"><svg class="w-6 h-6" viewBox="0 0 24 24"><path d="M16 20Q24 20 22 14" fill="none" stroke="#8b6a5b" stroke-width="1.500"/><svg x="7" y="0" width="17" height="15"><use href="#mon"/></svg><svg x="0" y="8" width="17" height="15"><use href="#mon"/></svg></svg><span class="ml-[9px]">Network proxy</span></div>
      </div>
      <div class="flex-1 rounded-b-[3px] border border-t-0 border-[#cfcdcb] bg-linear-to-b from-[#efeeec] to-[#fdfdfd] pl-[5px] pt-1">
        <div class="w-12 h-6 rounded-[5px] border border-[#b7b5b3] flex bg-[#ececeb] overflow-hidden"><div class="w-6 bg-linear-to-b from-white to-[#efeeed] border-r border-[#bdbbb9] flex items-center pl-[5px]"><svg class="size-3"><use href="#plus"/></svg></div><div class="flex-1 flex items-center justify-center text-[#95918c]"><svg class="size-3"><use href="#minus"/></svg></div></div>
      </div>
    </div>
    <div class="ml-[19px] mt-[18px] w-[441px] flex flex-col">
      <div class="h-[59px] flex">
        <svg class="ml-[49px] mt-[2px] w-[45px] h-[46px]" viewBox="0 0 45 46"><path d="M32 20Q40 19 38 22Q28 27 30 30Q42 37 36 41Q32 43 14 42.500" fill="none" stroke="#777" stroke-width="1.200"/><svg x="20" y="0" width="24" height="21"><use href="#mon"/></svg><svg x="0" y="23" width="24" height="21"><use href="#mon"/></svg></svg>
        <span class="ml-[7px] h-5 leading-5 mt-[-1px] text-[14.400px] font-bold">Proxy</span>
      </div>
      <div class="h-[31px] flex items-center"><span class="w-[95px] text-right mr-[7px]">Method</span><div class="flex-1 h-[31px] rounded-[5px] border border-[#a9a7a5] border-b-[#8d8b89] bg-linear-to-b from-white to-[#ebeae9] flex items-center pl-2">Manual<div class="ml-auto h-5 w-px bg-[#d4d2d0]"></div><svg class="ml-[5px] mr-[10px] w-[6px] h-[5px]" viewBox="0 0 6 5"><path d="M0 0H6L3 5Z" fill="#3c3c3c"/></svg></div></div>
      <div class="mt-3 h-[25px] flex items-center"><span class="w-[95px] text-right mr-[7px] tracking-[-0.1px]">HTTP Proxy</span><div class="w-[219px] h-[25px] rounded-[5px] border border-[#e5906c] bg-linear-to-b from-[#f4f4f4] to-white to-30% flex items-center pl-[6px] text-[#3c3c3c] tracking-[0.3px]">101<div class="w-px h-[15px] bg-black"></div></div>
        <div class="ml-2 w-28 h-[25px] rounded-[5px] border border-[#9c9a98] bg-linear-to-b from-[#f4f4f4] to-white to-30% flex"><span class="w-[54px] pr-[7px] pt-px text-right leading-[23px] tracking-[0.3px] border-r border-[#dcdad8]">8080</span><div class="w-[29px] flex items-center pl-[7px] border-r border-[#dcdad8] text-[#3c3c3c]"><svg class="size-3"><use href="#minus"/></svg></div><div class="flex-1 flex items-center pl-[7px]"><svg class="size-3"><use href="#plus"/></svg></div></div></div>
      <div class="mt-3 h-[25px] flex items-center"><span class="w-[95px] text-right mr-[7px] tracking-[-0.1px]">HTTPS Proxy</span><div class="w-[219px] h-[25px] rounded-[5px] border border-[#9c9a98] bg-linear-to-b from-[#f4f4f4] to-white to-50%"></div>
        <div class="ml-2 w-28 h-[25px] rounded-[5px] border border-[#9c9a98] bg-linear-to-b from-[#f4f4f4] to-white to-50% flex"><span class="w-[54px] border-r border-[#dcdad8]"></span><div class="w-[29px] flex items-center pl-[7px] border-r border-[#dcdad8] text-[#a3a09c]"><svg class="size-3"><use href="#minus"/></svg></div><div class="flex-1 flex items-center pl-[7px]"><svg class="size-3"><use href="#plus"/></svg></div></div></div>
      <div class="mt-3 h-[25px] flex items-center"><span class="w-[95px] text-right mr-[7px] tracking-[-0.1px]">FTP Proxy</span><div class="w-[219px] h-[25px] rounded-[5px] border border-[#9c9a98] bg-linear-to-b from-[#f4f4f4] to-white to-50%"></div>
        <div class="ml-2 w-28 h-[25px] rounded-[5px] border border-[#9c9a98] bg-linear-to-b from-[#f4f4f4] to-white to-50% flex"><span class="w-[54px] border-r border-[#dcdad8]"></span><div class="w-[29px] flex items-center pl-[7px] border-r border-[#dcdad8] text-[#a3a09c]"><svg class="size-3"><use href="#minus"/></svg></div><div class="flex-1 flex items-center pl-[7px]"><svg class="size-3"><use href="#plus"/></svg></div></div></div>
      <div class="mt-3 h-[25px] flex items-center"><span class="w-[95px] text-right mr-[7px]">Socks Host</span><div class="w-[219px] h-[25px] rounded-[5px] border border-[#9c9a98] bg-linear-to-b from-[#f4f4f4] to-white to-50%"></div>
        <div class="ml-2 w-28 h-[25px] rounded-[5px] border border-[#9c9a98] bg-linear-to-b from-[#f4f4f4] to-white to-50% flex"><span class="w-[54px] border-r border-[#dcdad8]"></span><div class="w-[29px] flex items-center pl-[7px] border-r border-[#dcdad8] text-[#a3a09c]"><svg class="size-3"><use href="#minus"/></svg></div><div class="flex-1 flex items-center pl-[7px]"><svg class="size-3"><use href="#plus"/></svg></div></div></div>
      <div class="mt-3 h-[25px] rounded-[5px] border border-[#a9a7a5] border-b-[#8d8b89] bg-linear-to-b from-white to-[#ebeae9] text-center leading-[23px] pt-px">Apply system wide</div>
    </div>
  </div>
</div>
</body>
</html>
